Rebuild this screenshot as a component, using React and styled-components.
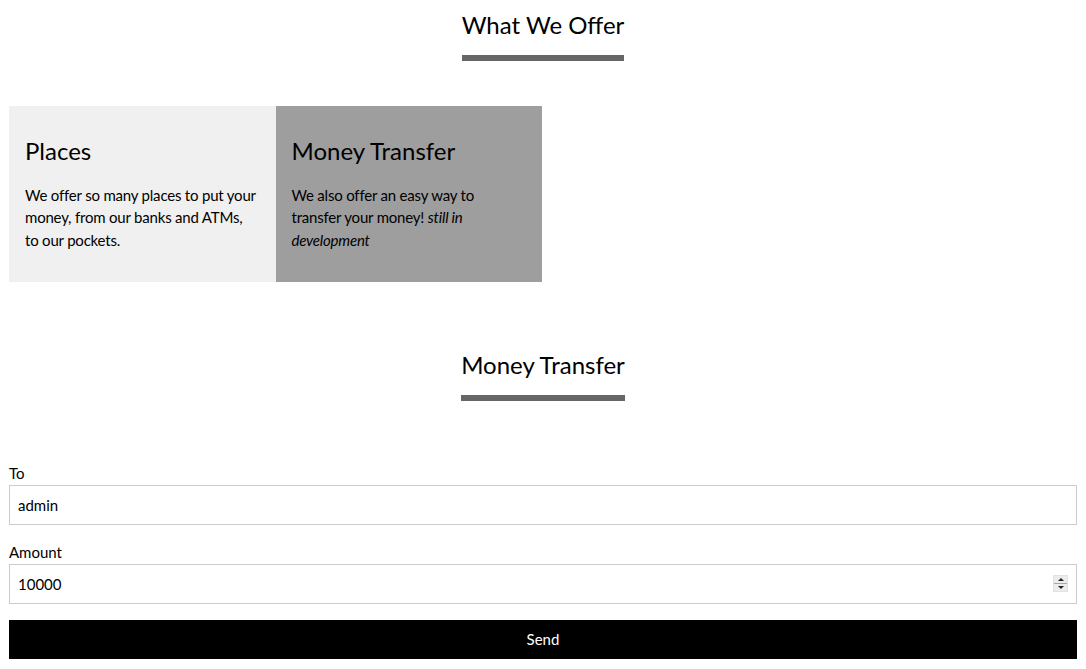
import styled, { createGlobalStyle } from "styled-components";

const GlobalStyle = createGlobalStyle`
    html, body {
        margin: 0;
        padding: 0;
        background: #fff;
        font-family: Lato, "Open Sans", sans-serif;
        font-size: 15px;
        line-height: 1.5;
        color: #000;
    }
`;

const Page = styled.div`
    padding: 0 9px;
`;

const Section = styled.section`
    display: flex;
    flex-direction: column;
    align-items: center;
    padding-top: ${props => props.top}px;
`;

const Heading = styled.h2`
    margin: 0;
    font-size: 24px;
    font-weight: 400;
    line-height: 1.2;
    padding-bottom: 15px;
    border-bottom: 6px solid #666;
`;

const Cards = styled.div`
    display: flex;
    width: 100%;
    margin-top: 45px;
`;

const Card = styled.div`
    width: 266.5px;
    box-sizing: border-box;
    padding: 16px 17.5px 16px 16px;
    background: ${props => props.bg};
`;

const CardTitle = styled.h3`
    margin: 15px 0 18px;
    font-size: 24px;
    font-weight: 400;
    line-height: 1.2;
`;

const CardText = styled.p`
    margin: 0 0 15px;
    font-size: 15px;
    line-height: 22.5px;
    letter-spacing: -0.2px;
`;

const Form = styled.form`
    display: flex;
    flex-direction: column;
    width: 100%;
    margin-top: 62px;
`;

const Label = styled.label`
    display: block;
    font-size: 15px;
    line-height: 20px;
    padding-bottom: 2px;
    margin-top: ${props => props.gap || 0}px;
`;

const Field = styled.div`
    position: relative;
`;

const Input = styled.input`
    display: block;
    width: 100%;
    box-sizing: border-box;
    height: 40px;
    padding: 8px;
    border: 1px solid #ccc;
    font-family: Lato, "Open Sans", sans-serif;
    font-size: 15px;
    color: #000;
    outline: none;
    -moz-appearance: textfield;

    &::-webkit-inner-spin-button,
    &::-webkit-outer-spin-button {
        -webkit-appearance: none;
        margin: 0;
    }
`;

const Spinner = styled.div`
    position: absolute;
    right: 9px;
    top: 11px;
    width: 15px;
    height: 17px;
    display: flex;
    flex-direction: column;
    background: #ececec;
    border: 1px solid #e2e2e2;
    box-sizing: border-box;
`;

const SpinPart = styled.div`
    flex: 1;
    display: flex;
    align-items: center;
    justify-content: center;
    border-top: ${props => props.down ? "1px solid #a8a8a8" : "none"};

    &::after {
        content: "";
        width: 0;
        height: 0;
        border-left: 3px solid transparent;
        border-right: 3px solid transparent;
        ${props => props.down
            ? "border-top: 3px solid #222;"
            : "border-bottom: 3px solid #222;"}
    }
`;

const SendButton = styled.button`
    margin-top: 16px;
    height: 39px;
    width: 100%;
    border: none;
    background: #000;
    color: #fff;
    font-family: Lato, "Open Sans", sans-serif;
    font-size: 15px;
    cursor: pointer;
`;

const App = () => {
    return (
        <Page>
            <GlobalStyle />
            <Section top={11}>
                <Heading>What We Offer</Heading>
                <Cards>
                    <Card bg="#f0f0f0">
                        <CardTitle>Places</CardTitle>
                        <CardText>
                            We offer so many places to put your money, from our banks and ATMs, to our pockets.
                        </CardText>
                    </Card>
                    <Card bg="#9e9e9e">
                        <CardTitle>Money Transfer</CardTitle>
                        <CardText>
                            We also offer an easy way to transfer your money! <em>still in development</em>
                        </CardText>
                    </Card>
                </Cards>
            </Section>
            <Section top={69}>
                <Heading>Money Transfer</Heading>
                <Form onSubmit={e => e.preventDefault()}>
                    <Label htmlFor="to">To</Label>
                    <Input id="to" type="text" defaultValue="admin" />
                    <Label htmlFor="amount" gap={17}>Amount</Label>
                    <Field>
                        <Input id="amount" type="number" defaultValue="10000" />
                        <Spinner>
                            <SpinPart />
                            <SpinPart down />
                        </Spinner>
                    </Field>
                    <SendButton type="submit">Send</SendButton>
                </Form>
            </Section>
        </Page>
    )
}

export default App
